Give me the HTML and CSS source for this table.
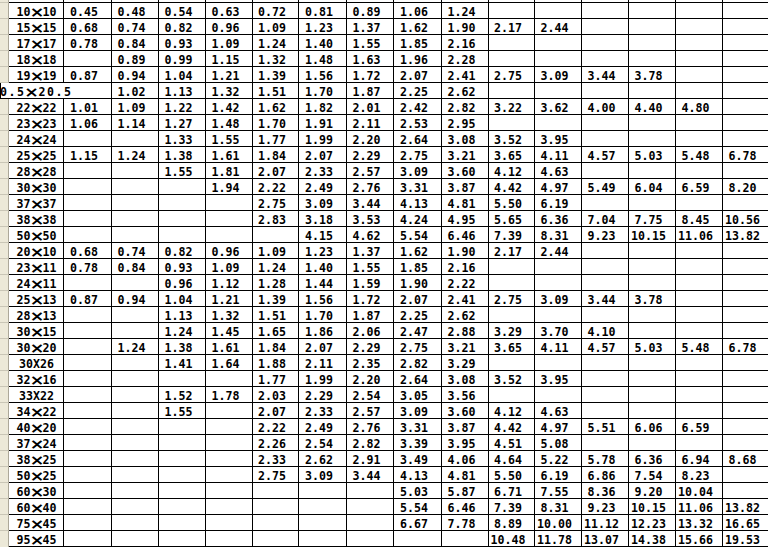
FILE: index.html
```html
<!DOCTYPE html>
<html>
<head>
<meta charset="utf-8">
<link rel="stylesheet" href="styles.css">
</head>
<body>
<table class="sheet">
<colgroup>
<col class="w-rh"><col class="w-lb">
<col class="w48"><col class="w47"><col class="w47"><col class="w47"><col class="w46"><col class="w48"><col class="w47"><col class="w48"><col class="w47"><col class="w46"><col class="w47"><col class="w47"><col class="w47"><col class="w47"><col class="w47">
</colgroup>
<tbody>
<tr><td class="rh"></td><td></td><td></td><td></td><td></td><td></td><td></td><td></td><td></td><td></td><td></td><td></td><td></td><td></td><td></td><td></td><td></td></tr>
<tr><td class="rh"></td><td class="lb">10<span class="x">×</span>10</td><td>0.45</td><td>0.48</td><td>0.54</td><td>0.63</td><td>0.72</td><td>0.81</td><td>0.89</td><td>1.06</td><td>1.24</td><td></td><td></td><td></td><td></td><td></td><td></td></tr>
<tr><td class="rh"></td><td class="lb">15<span class="x">×</span>15</td><td>0.68</td><td>0.74</td><td>0.82</td><td>0.96</td><td>1.09</td><td>1.23</td><td>1.37</td><td>1.62</td><td>1.90</td><td>2.17</td><td>2.44</td><td></td><td></td><td></td><td></td></tr>
<tr><td class="rh"></td><td class="lb">17<span class="x">×</span>17</td><td>0.78</td><td>0.84</td><td>0.93</td><td>1.09</td><td>1.24</td><td>1.40</td><td>1.55</td><td>1.85</td><td>2.16</td><td></td><td></td><td></td><td></td><td></td><td></td></tr>
<tr><td class="rh"></td><td class="lb">18<span class="x">×</span>18</td><td></td><td>0.89</td><td>0.99</td><td>1.15</td><td>1.32</td><td>1.48</td><td>1.63</td><td>1.96</td><td>2.28</td><td></td><td></td><td></td><td></td><td></td><td></td></tr>
<tr><td class="rh"></td><td class="lb">19<span class="x">×</span>19</td><td>0.87</td><td>0.94</td><td>1.04</td><td>1.21</td><td>1.39</td><td>1.56</td><td>1.72</td><td>2.07</td><td>2.41</td><td>2.75</td><td>3.09</td><td>3.44</td><td>3.78</td><td></td><td></td></tr>
<tr><td class="ov" colspan="3">0.5<span class="x">×</span>20.5</td><td>1.02</td><td>1.13</td><td>1.32</td><td>1.51</td><td>1.70</td><td>1.87</td><td>2.25</td><td>2.62</td><td></td><td></td><td></td><td></td><td></td><td></td></tr>
<tr><td class="rh"></td><td class="lb">22<span class="x">×</span>22</td><td>1.01</td><td>1.09</td><td>1.22</td><td>1.42</td><td>1.62</td><td>1.82</td><td>2.01</td><td>2.42</td><td>2.82</td><td>3.22</td><td>3.62</td><td>4.00</td><td>4.40</td><td>4.80</td><td></td></tr>
<tr><td class="rh"></td><td class="lb">23<span class="x">×</span>23</td><td>1.06</td><td>1.14</td><td>1.27</td><td>1.48</td><td>1.70</td><td>1.91</td><td>2.11</td><td>2.53</td><td>2.95</td><td></td><td></td><td></td><td></td><td></td><td></td></tr>
<tr><td class="rh"></td><td class="lb">24<span class="x">×</span>24</td><td></td><td></td><td>1.33</td><td>1.55</td><td>1.77</td><td>1.99</td><td>2.20</td><td>2.64</td><td>3.08</td><td>3.52</td><td>3.95</td><td></td><td></td><td></td><td></td></tr>
<tr><td class="rh"></td><td class="lb">25<span class="x">×</span>25</td><td>1.15</td><td>1.24</td><td>1.38</td><td>1.61</td><td>1.84</td><td>2.07</td><td>2.29</td><td>2.75</td><td>3.21</td><td>3.65</td><td>4.11</td><td>4.57</td><td>5.03</td><td>5.48</td><td>6.78</td></tr>
<tr><td class="rh"></td><td class="lb">28<span class="x">×</span>28</td><td></td><td></td><td>1.55</td><td>1.81</td><td>2.07</td><td>2.33</td><td>2.57</td><td>3.09</td><td>3.60</td><td>4.12</td><td>4.63</td><td></td><td></td><td></td><td></td></tr>
<tr><td class="rh"></td><td class="lb">30<span class="x">×</span>30</td><td></td><td></td><td></td><td>1.94</td><td>2.22</td><td>2.49</td><td>2.76</td><td>3.31</td><td>3.87</td><td>4.42</td><td>4.97</td><td>5.49</td><td>6.04</td><td>6.59</td><td>8.20</td></tr>
<tr><td class="rh"></td><td class="lb">37<span class="x">×</span>37</td><td></td><td></td><td></td><td></td><td>2.75</td><td>3.09</td><td>3.44</td><td>4.13</td><td>4.81</td><td>5.50</td><td>6.19</td><td></td><td></td><td></td><td></td></tr>
<tr><td class="rh"></td><td class="lb">38<span class="x">×</span>38</td><td></td><td></td><td></td><td></td><td>2.83</td><td>3.18</td><td>3.53</td><td>4.24</td><td>4.95</td><td>5.65</td><td>6.36</td><td>7.04</td><td>7.75</td><td>8.45</td><td>10.56</td></tr>
<tr><td class="rh"></td><td class="lb">50<span class="x">×</span>50</td><td></td><td></td><td></td><td></td><td></td><td>4.15</td><td>4.62</td><td>5.54</td><td>6.46</td><td>7.39</td><td>8.31</td><td>9.23</td><td>10.15</td><td>11.06</td><td>13.82</td></tr>
<tr><td class="rh"></td><td class="lb">20<span class="x">×</span>10</td><td>0.68</td><td>0.74</td><td>0.82</td><td>0.96</td><td>1.09</td><td>1.23</td><td>1.37</td><td>1.62</td><td>1.90</td><td>2.17</td><td>2.44</td><td></td><td></td><td></td><td></td></tr>
<tr><td class="rh"></td><td class="lb">23<span class="x">×</span>11</td><td>0.78</td><td>0.84</td><td>0.93</td><td>1.09</td><td>1.24</td><td>1.40</td><td>1.55</td><td>1.85</td><td>2.16</td><td></td><td></td><td></td><td></td><td></td><td></td></tr>
<tr><td class="rh"></td><td class="lb">24<span class="x">×</span>11</td><td></td><td></td><td>0.96</td><td>1.12</td><td>1.28</td><td>1.44</td><td>1.59</td><td>1.90</td><td>2.22</td><td></td><td></td><td></td><td></td><td></td><td></td></tr>
<tr><td class="rh"></td><td class="lb">25<span class="x">×</span>13</td><td>0.87</td><td>0.94</td><td>1.04</td><td>1.21</td><td>1.39</td><td>1.56</td><td>1.72</td><td>2.07</td><td>2.41</td><td>2.75</td><td>3.09</td><td>3.44</td><td>3.78</td><td></td><td></td></tr>
<tr><td class="rh"></td><td class="lb">28<span class="x">×</span>13</td><td></td><td></td><td>1.13</td><td>1.32</td><td>1.51</td><td>1.70</td><td>1.87</td><td>2.25</td><td>2.62</td><td></td><td></td><td></td><td></td><td></td><td></td></tr>
<tr><td class="rh"></td><td class="lb">30<span class="x">×</span>15</td><td></td><td></td><td>1.24</td><td>1.45</td><td>1.65</td><td>1.86</td><td>2.06</td><td>2.47</td><td>2.88</td><td>3.29</td><td>3.70</td><td>4.10</td><td></td><td></td><td></td></tr>
<tr><td class="rh"></td><td class="lb">30<span class="x">×</span>20</td><td></td><td>1.24</td><td>1.38</td><td>1.61</td><td>1.84</td><td>2.07</td><td>2.29</td><td>2.75</td><td>3.21</td><td>3.65</td><td>4.11</td><td>4.57</td><td>5.03</td><td>5.48</td><td>6.78</td></tr>
<tr><td class="rh"></td><td class="lb">30X26</td><td></td><td></td><td>1.41</td><td>1.64</td><td>1.88</td><td>2.11</td><td>2.35</td><td>2.82</td><td>3.29</td><td></td><td></td><td></td><td></td><td></td><td></td></tr>
<tr><td class="rh"></td><td class="lb">32<span class="x">×</span>16</td><td></td><td></td><td></td><td></td><td>1.77</td><td>1.99</td><td>2.20</td><td>2.64</td><td>3.08</td><td>3.52</td><td>3.95</td><td></td><td></td><td></td><td></td></tr>
<tr><td class="rh"></td><td class="lb">33X22</td><td></td><td></td><td>1.52</td><td>1.78</td><td>2.03</td><td>2.29</td><td>2.54</td><td>3.05</td><td>3.56</td><td></td><td></td><td></td><td></td><td></td><td></td></tr>
<tr><td class="rh"></td><td class="lb">34<span class="x">×</span>22</td><td></td><td></td><td>1.55</td><td></td><td>2.07</td><td>2.33</td><td>2.57</td><td>3.09</td><td>3.60</td><td>4.12</td><td>4.63</td><td></td><td></td><td></td><td></td></tr>
<tr><td class="rh"></td><td class="lb">40<span class="x">×</span>20</td><td></td><td></td><td></td><td></td><td>2.22</td><td>2.49</td><td>2.76</td><td>3.31</td><td>3.87</td><td>4.42</td><td>4.97</td><td>5.51</td><td>6.06</td><td>6.59</td><td></td></tr>
<tr><td class="rh"></td><td class="lb">37<span class="x">×</span>24</td><td></td><td></td><td></td><td></td><td>2.26</td><td>2.54</td><td>2.82</td><td>3.39</td><td>3.95</td><td>4.51</td><td>5.08</td><td></td><td></td><td></td><td></td></tr>
<tr><td class="rh"></td><td class="lb">38<span class="x">×</span>25</td><td></td><td></td><td></td><td></td><td>2.33</td><td>2.62</td><td>2.91</td><td>3.49</td><td>4.06</td><td>4.64</td><td>5.22</td><td>5.78</td><td>6.36</td><td>6.94</td><td>8.68</td></tr>
<tr><td class="rh"></td><td class="lb">50<span class="x">×</span>25</td><td></td><td></td><td></td><td></td><td>2.75</td><td>3.09</td><td>3.44</td><td>4.13</td><td>4.81</td><td>5.50</td><td>6.19</td><td>6.86</td><td>7.54</td><td>8.23</td><td></td></tr>
<tr><td class="rh"></td><td class="lb">60<span class="x">×</span>30</td><td></td><td></td><td></td><td></td><td></td><td></td><td></td><td>5.03</td><td>5.87</td><td>6.71</td><td>7.55</td><td>8.36</td><td>9.20</td><td>10.04</td><td></td></tr>
<tr><td class="rh"></td><td class="lb">60<span class="x">×</span>40</td><td></td><td></td><td></td><td></td><td></td><td></td><td></td><td>5.54</td><td>6.46</td><td>7.39</td><td>8.31</td><td>9.23</td><td>10.15</td><td>11.06</td><td>13.82</td></tr>
<tr><td class="rh"></td><td class="lb">75<span class="x">×</span>45</td><td></td><td></td><td></td><td></td><td></td><td></td><td></td><td>6.67</td><td>7.78</td><td>8.89</td><td>10.00</td><td>11.12</td><td>12.23</td><td>13.32</td><td>16.65</td></tr>
<tr class="last"><td class="rh"></td><td class="lb">95<span class="x">×</span>45</td><td></td><td></td><td></td><td></td><td></td><td></td><td></td><td></td><td></td><td>10.48</td><td>11.78</td><td>13.07</td><td>14.38</td><td>15.66</td><td>19.53</td></tr>
</tbody>
</table>
</body>
</html>
```

FILE: styles.css
```css
html, body {
  margin: 0;
  padding: 0;
  background: #fff;
  overflow: hidden;
  height: 547px;
}

.sheet {
  border-collapse: separate;
  border-spacing: 0;
  table-layout: fixed;
  width: 770px;
  margin-top: -13px;
  font-family: "DejaVu Sans Mono", "Liberation Mono", monospace;
  font-weight: bold;
  font-size: 11.6px;
  color: #000;
}

.w-rh { width: 9px; }
.w-lb { width: 55px; }
.w48 { width: 48px; }
.w47 { width: 47px; }
.w46 { width: 46px; }

.sheet td {
  box-sizing: border-box;
  height: 16px;
  padding: 4px 7px 0 0;
  line-height: 11px;
  border-right: 1px solid #000;
  border-bottom: 1px solid #000;
  text-align: center;
  vertical-align: top;
  white-space: nowrap;
  overflow: hidden;
}

.sheet td.rh {
  background: #ece9d8;
  border-right: 1px solid #aca899;
  border-bottom: 1px solid #c9c6b6;
  padding: 0;
}

.sheet td.lb {
  padding-right: 0;
  padding-left: 1px;
}

.sheet td.ov {
  text-align: left;
  padding-left: 0;
  padding-right: 0;
  border-left: 1px solid #000;
  text-indent: -1px;
  letter-spacing: 1.5px;
}

.x {
  display: inline-block;
  width: 12px;
  text-align: center;
  font-family: "DejaVu Sans", sans-serif;
  font-weight: bold;
  transform: scale(1.5, 1.2);
}

.ov .x {
  width: 13px;
  text-indent: 0;
  letter-spacing: 0;
}

.sheet tr.last td {
  border-bottom: 3px solid #000;
}

.sheet tr.last td.rh {
  border-bottom: 1px solid #c9c6b6;
}
```
